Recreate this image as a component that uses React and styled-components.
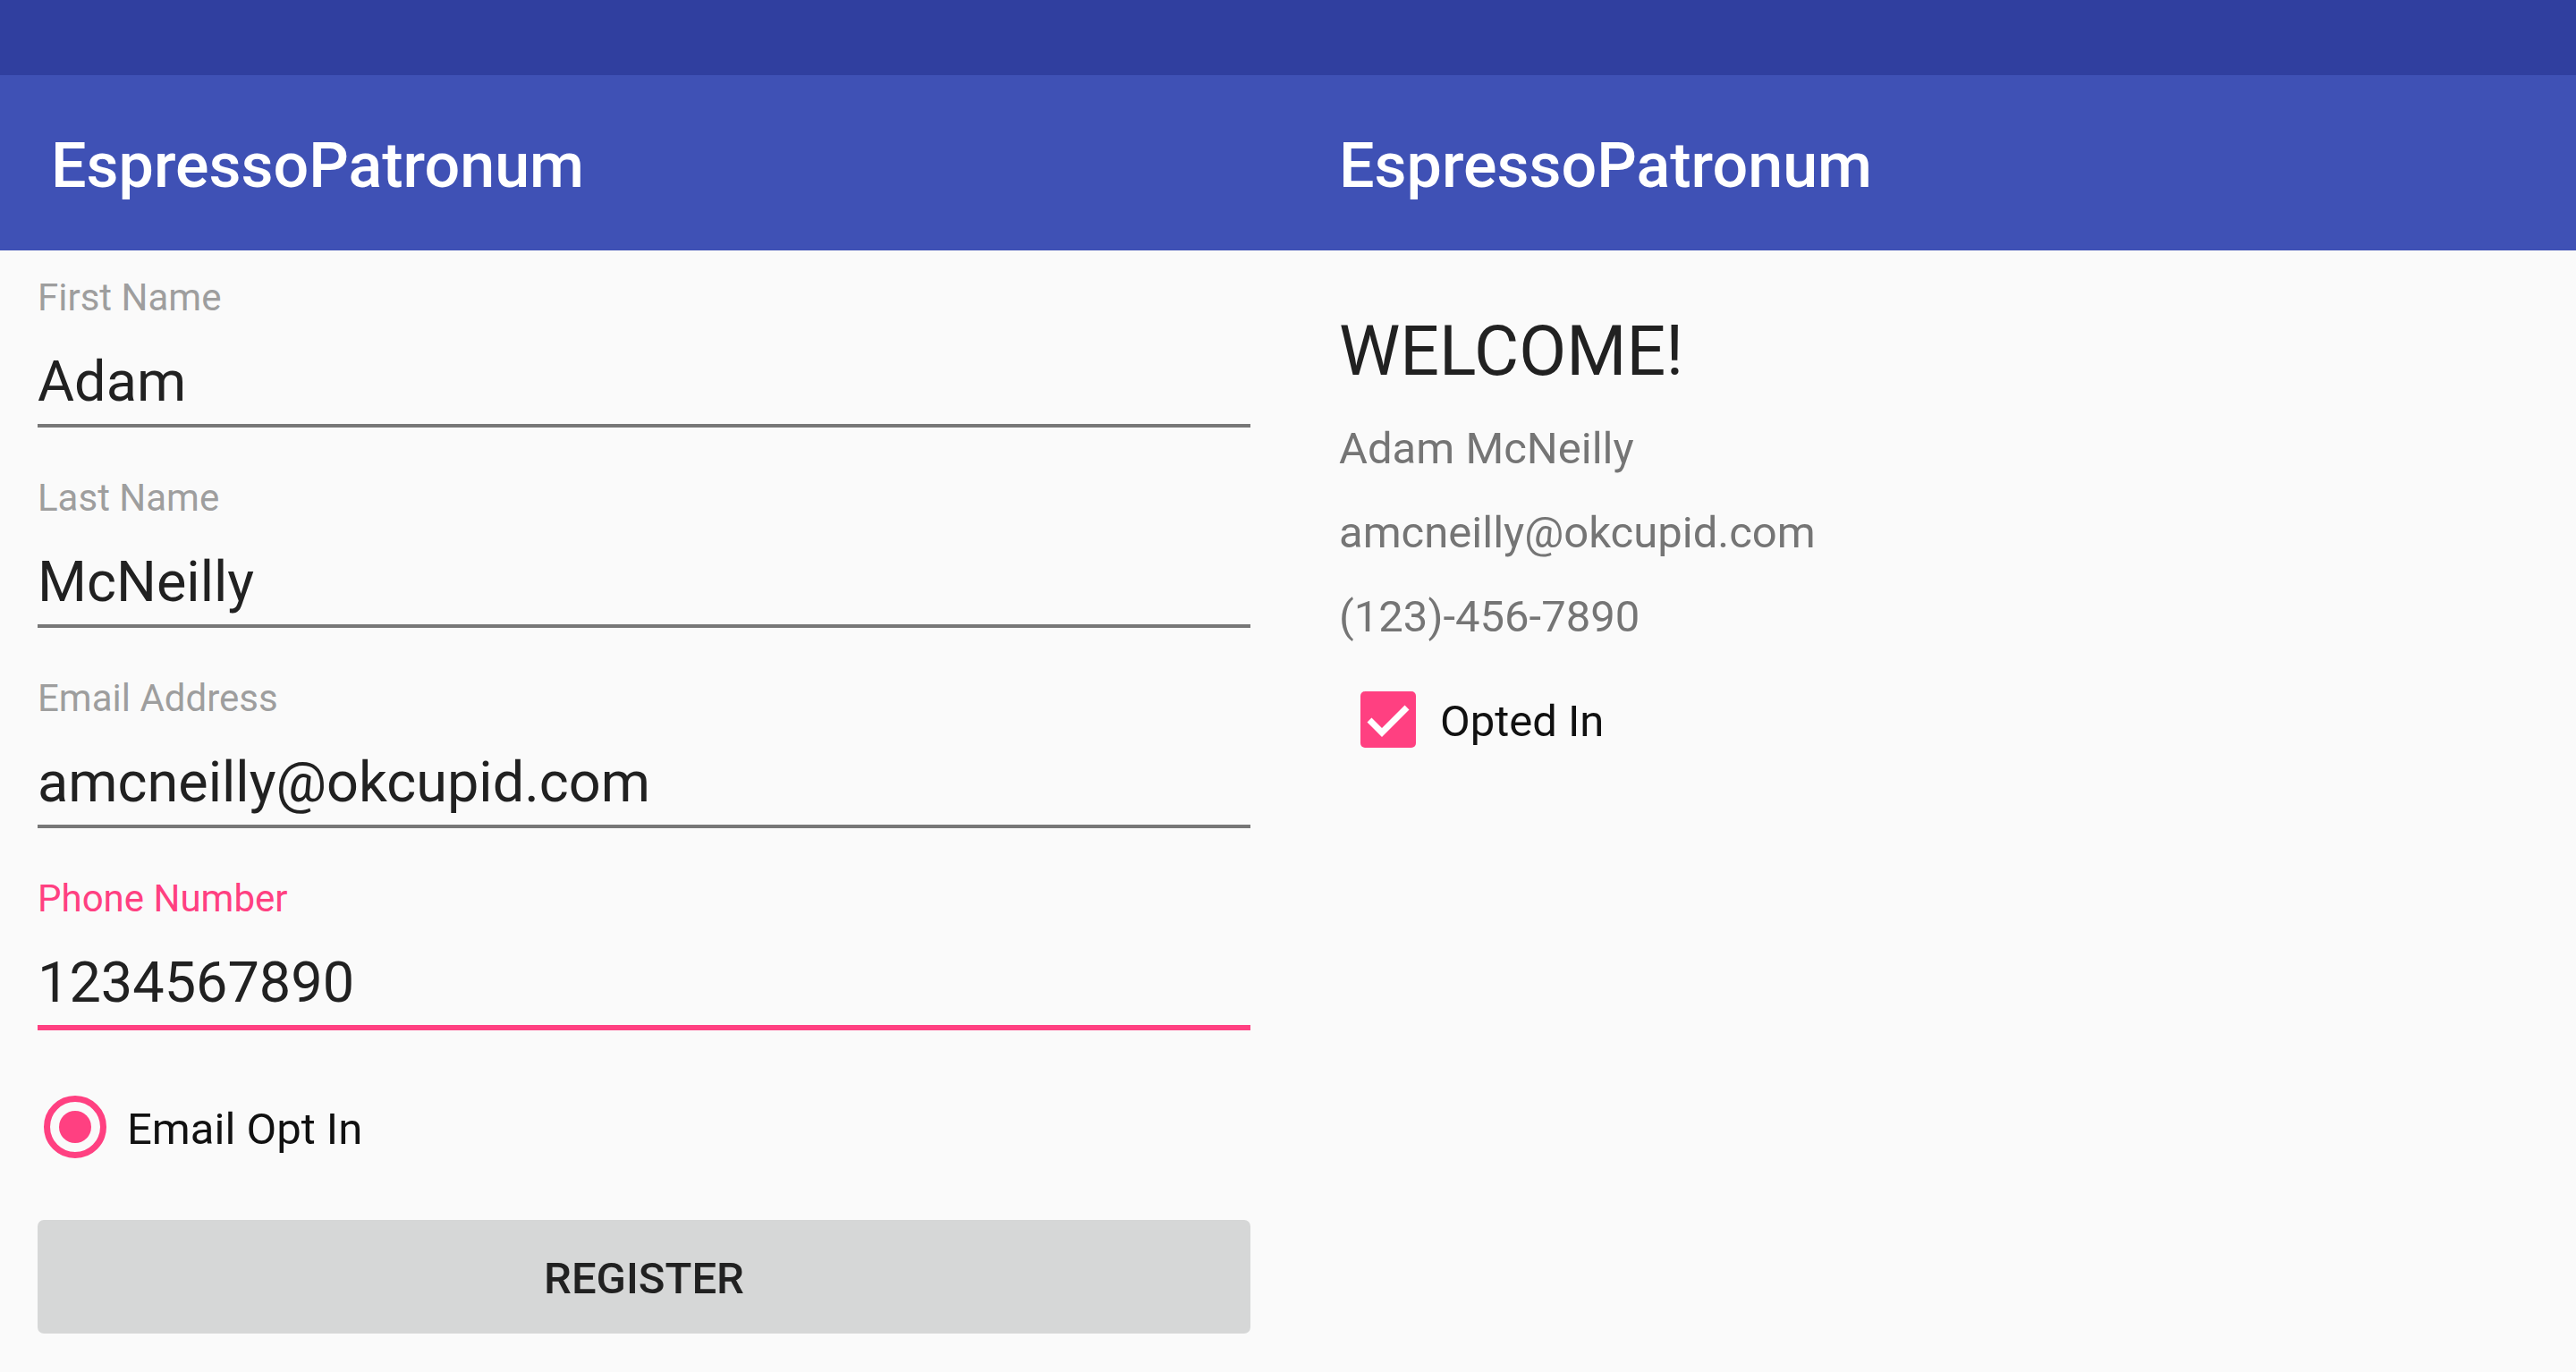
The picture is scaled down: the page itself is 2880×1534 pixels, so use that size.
import React from 'react';
import styled, { createGlobalStyle } from 'styled-components';

const GlobalStyle = createGlobalStyle`
  html, body {
    margin: 0;
    padding: 0;
    background: #fafafa;
  }
  body {
    font-family: Roboto, "Noto Sans", "Liberation Sans", sans-serif;
  }
`;

const fields = [
  { label: 'First Name', value: 'Adam' },
  { label: 'Last Name', value: 'McNeilly' },
  { label: 'Email Address', value: 'amcneilly@okcupid.com' },
  { label: 'Phone Number', value: '1234567890', focused: true },
];

const FormField = ({ label, value, focused }) => (
  <Field>
    <FieldLabel focused={focused}>{label}</FieldLabel>
    <FieldValue>{value}</FieldValue>
    <Underline focused={focused} />
  </Field>
);

const CheckIcon = () => (
  <svg width="62" height="62" viewBox="0 0 62 62">
    <polyline points="10,31 24,45 52,17" fill="none" stroke="#fff" strokeWidth="7" strokeLinejoin="miter" />
  </svg>
);

const App = () => {
  return <Main>
    <GlobalStyle />
    <Screen>
      <StatusBar />
      <Toolbar>
        <ToolbarTitle>EspressoPatronum</ToolbarTitle>
      </Toolbar>
      <Form>
        {fields.map(f => <FormField key={f.label} {...f} />)}

        <RadioRow>
          <Radio>
            <RadioDot />
          </Radio>
          <OptionText>Email Opt In</OptionText>
        </RadioRow>

        <RegisterButton>Register</RegisterButton>
      </Form>
    </Screen>

    <Screen>
      <StatusBar />
      <Toolbar>
        <ToolbarTitle>EspressoPatronum</ToolbarTitle>
      </Toolbar>
      <Summary>
        <Welcome>WELCOME!</Welcome>
        <InfoLine>Adam McNeilly</InfoLine>
        <InfoLine>amcneilly@okcupid.com</InfoLine>
        <InfoLine>(123)-456-7890</InfoLine>
        <CheckRow>
          <CheckBox>
            <CheckIcon />
          </CheckBox>
          <OptionText>Opted In</OptionText>
        </CheckRow>
      </Summary>
    </Screen>
  </Main>
}

const Main = styled.div`
  display: flex;
  width: 2880px;
  height: 1534px;
  overflow: hidden;
  background: #fafafa;
`;

const Screen = styled.div`
  display: flex;
  flex-direction: column;
  width: 1440px;
  flex: 0 0 1440px;
`;

const StatusBar = styled.div`
  height: 84px;
  background: #303f9f;
`;

const Toolbar = styled.div`
  display: flex;
  align-items: center;
  height: 196px;
  padding: 0 56px 0 57px;
  background: #3f51b5;
`;

const ToolbarTitle = styled.div`
  margin-top: 6px;
  font-size: 70px;
  line-height: 82px;
  font-weight: 500;
  color: #fff;
`;

const Form = styled.div`
  display: flex;
  flex-direction: column;
  padding: 25px 42px 0 42px;
`;

const Field = styled.div`
  display: flex;
  flex-direction: column;
  margin-bottom: 51px;
  &:nth-of-type(4) {
    margin-bottom: 0;
  }
`;

const FieldLabel = styled.div`
  height: 56px;
  font-size: 42px;
  line-height: 56px;
  color: ${p => (p.focused ? '#ff4081' : '#9e9e9e')};
`;

const FieldValue = styled.div`
  margin-top: 24px;
  height: 84px;
  font-size: 63px;
  line-height: 84px;
  color: #212121;
`;

const Underline = styled.div`
  margin-top: 5px;
  height: ${p => (p.focused ? '6px' : '4px')};
  background: ${p => (p.focused ? '#ff4081' : '#777777')};
`;

const RadioRow = styled.div`
  display: flex;
  align-items: center;
  height: 70px;
  margin-top: 73px;
  padding-left: 7px;

  & > div:last-child {
    margin-left: 23px;
  }
`;

const Radio = styled.div`
  display: flex;
  align-items: center;
  justify-content: center;
  box-sizing: border-box;
  width: 70px;
  height: 70px;
  border: 7px solid #ff4081;
  border-radius: 50%;
`;

const RadioDot = styled.div`
  width: 36px;
  height: 36px;
  border-radius: 50%;
  background: #ff4081;
`;

const OptionText = styled.div`
  margin-left: 24px;
  padding-top: 5px;
  font-size: 49px;
  line-height: 62px;
  color: #111;
`;

const RegisterButton = styled.div`
  display: flex;
  align-items: center;
  justify-content: center;
  height: 127px;
  margin-top: 69px;
  padding-top: 3px;
  box-sizing: border-box;
  border-radius: 7px;
  background: #d6d7d7;
  font-size: 49px;
  font-weight: 500;
  text-transform: uppercase;
  color: #212121;
`;

const Summary = styled.div`
  display: flex;
  flex-direction: column;
  padding: 63px 56px 0 57px;
`;

const Welcome = styled.div`
  margin-bottom: 12px;
  font-size: 77px;
  line-height: 100px;
  color: #212121;
`;

const InfoLine = styled.div`
  font-size: 49px;
  line-height: 94px;
  color: #757575;
`;

const CheckRow = styled.div`
  display: flex;
  align-items: center;
  height: 63px;
  margin-top: 36px;
  padding-left: 24px;

  ${OptionText} {
    margin-left: 27px;
  }
`;

const CheckBox = styled.div`
  display: flex;
  width: 62px;
  height: 63px;
  border-radius: 5px;
  background: #ff4081;
  align-items: center;
  justify-content: center;
`;

export default App;
